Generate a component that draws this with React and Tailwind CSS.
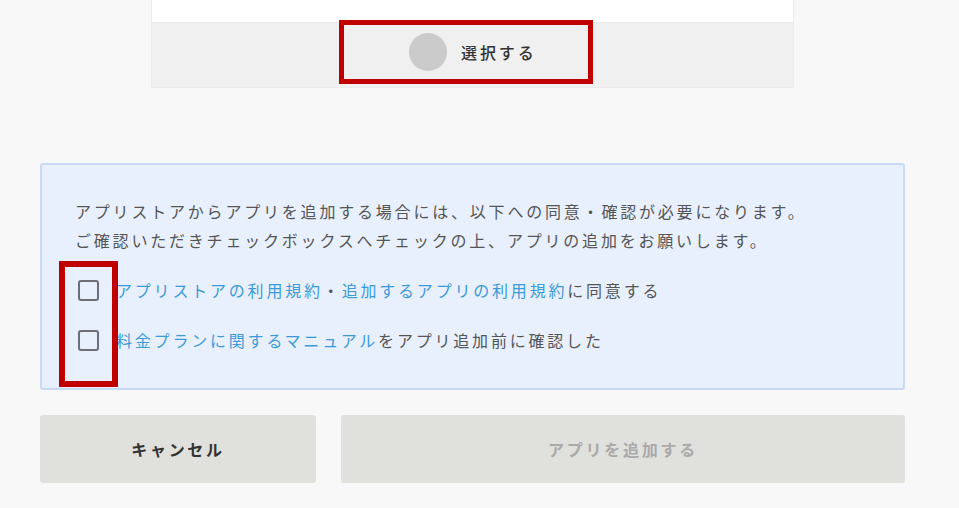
import React, { useState } from 'react';

const font = { fontFamily: '"Noto Sans CJK JP", "Noto Sans", sans-serif' };

const Checkbox = ({ checked, onChange }) => (
  <button
    onClick={onChange}
    className="w-[21px] h-[21px] shrink-0 rounded-[3px] border-2 border-[#6d6e78] bg-transparent"
  >
    {checked && (
      <svg viewBox="0 0 20 20" className="w-full h-full">
        <path d="M4 10l4 4 8-8" fill="none" stroke="#6d6e78" strokeWidth="2.5" />
      </svg>
    )}
  </button>
);

const App = () => {
  const [terms, setTerms] = useState(false);
  const [manual, setManual] = useState(false);
  const ready = terms && manual;

  return (
    <div className="min-h-[508px] w-[959px] bg-[#f8f8f8] overflow-hidden" style={font}>
      {/* app card, scrolled so only its bottom shows */}
      <div className="ml-[151px] w-[643px] border-x border-b border-[#ececec]">
        <div className="h-[23px] bg-white border-b border-[#ececec]" />
        <div className="h-[64px] bg-[#f0f0f0] flex items-start">
          <button className="ml-[187px] -mt-[3px] w-[254px] h-[64px] border-[5px] border-[#c00000] flex items-center pl-[65px] gap-[14px]">
            <span className="w-[38px] h-[38px] rounded-full bg-[#cbcbcb]" />
            <span className="text-[16px] font-medium text-[#333] tracking-[0.18em]">選択する</span>
          </button>
        </div>
      </div>

      <div className="ml-[40px] mr-[54px] mt-[75px]">
        <div className="relative border-2 border-[#c8daf6] rounded-[3px] bg-[#e8f0fd] pt-[32px] pb-[33px] px-[33px] text-[16px] leading-[29px] tracking-[0.175em] text-[#555]">
          <p>アプリストアからアプリを追加する場合には、以下への同意・確認が必要になります。</p>
          <p>ご確認いただきチェックボックスへチェックの上、アプリの追加をお願いします。</p>

          <div className="mt-[21px] flex items-center gap-[17px] pl-[3px]">
            <Checkbox checked={terms} onChange={() => setTerms(!terms)} />
            <span>
              <a className="text-[#3b9ad9]">アプリストアの利用規約</a>・<a className="text-[#3b9ad9]">追加するアプリの利用規約</a>に同意する
            </span>
          </div>
          <div className="mt-[21px] flex items-center gap-[17px] pl-[3px]">
            <Checkbox checked={manual} onChange={() => setManual(!manual)} />
            <span>
              <a className="text-[#3b9ad9]">料金プランに関するマニュアル</a>をアプリ追加前に確認した
            </span>
          </div>

          {/* highlight annotation */}
          <div className="absolute left-[17px] top-[96px] w-[59px] h-[126px] border-[6px] border-[#c00000] pointer-events-none" />
        </div>

        <div className="mt-[25px] flex gap-[25px]">
          <button className="w-[276px] h-[68px] rounded-[3px] bg-[#e0e0dc] text-[16px] font-bold text-[#333] tracking-[0.17em]">
            キャンセル
          </button>
          <button
            disabled={!ready}
            className={`flex-1 h-[68px] rounded-[3px] text-[16px] font-bold tracking-[0.17em] ${
              ready ? 'bg-[#3b9ad9] text-white' : 'bg-[#e0e0dc] text-[#aaa]'
            }`}
          >
            アプリを追加する
          </button>
        </div>
      </div>
    </div>
  );
};

export default App;
